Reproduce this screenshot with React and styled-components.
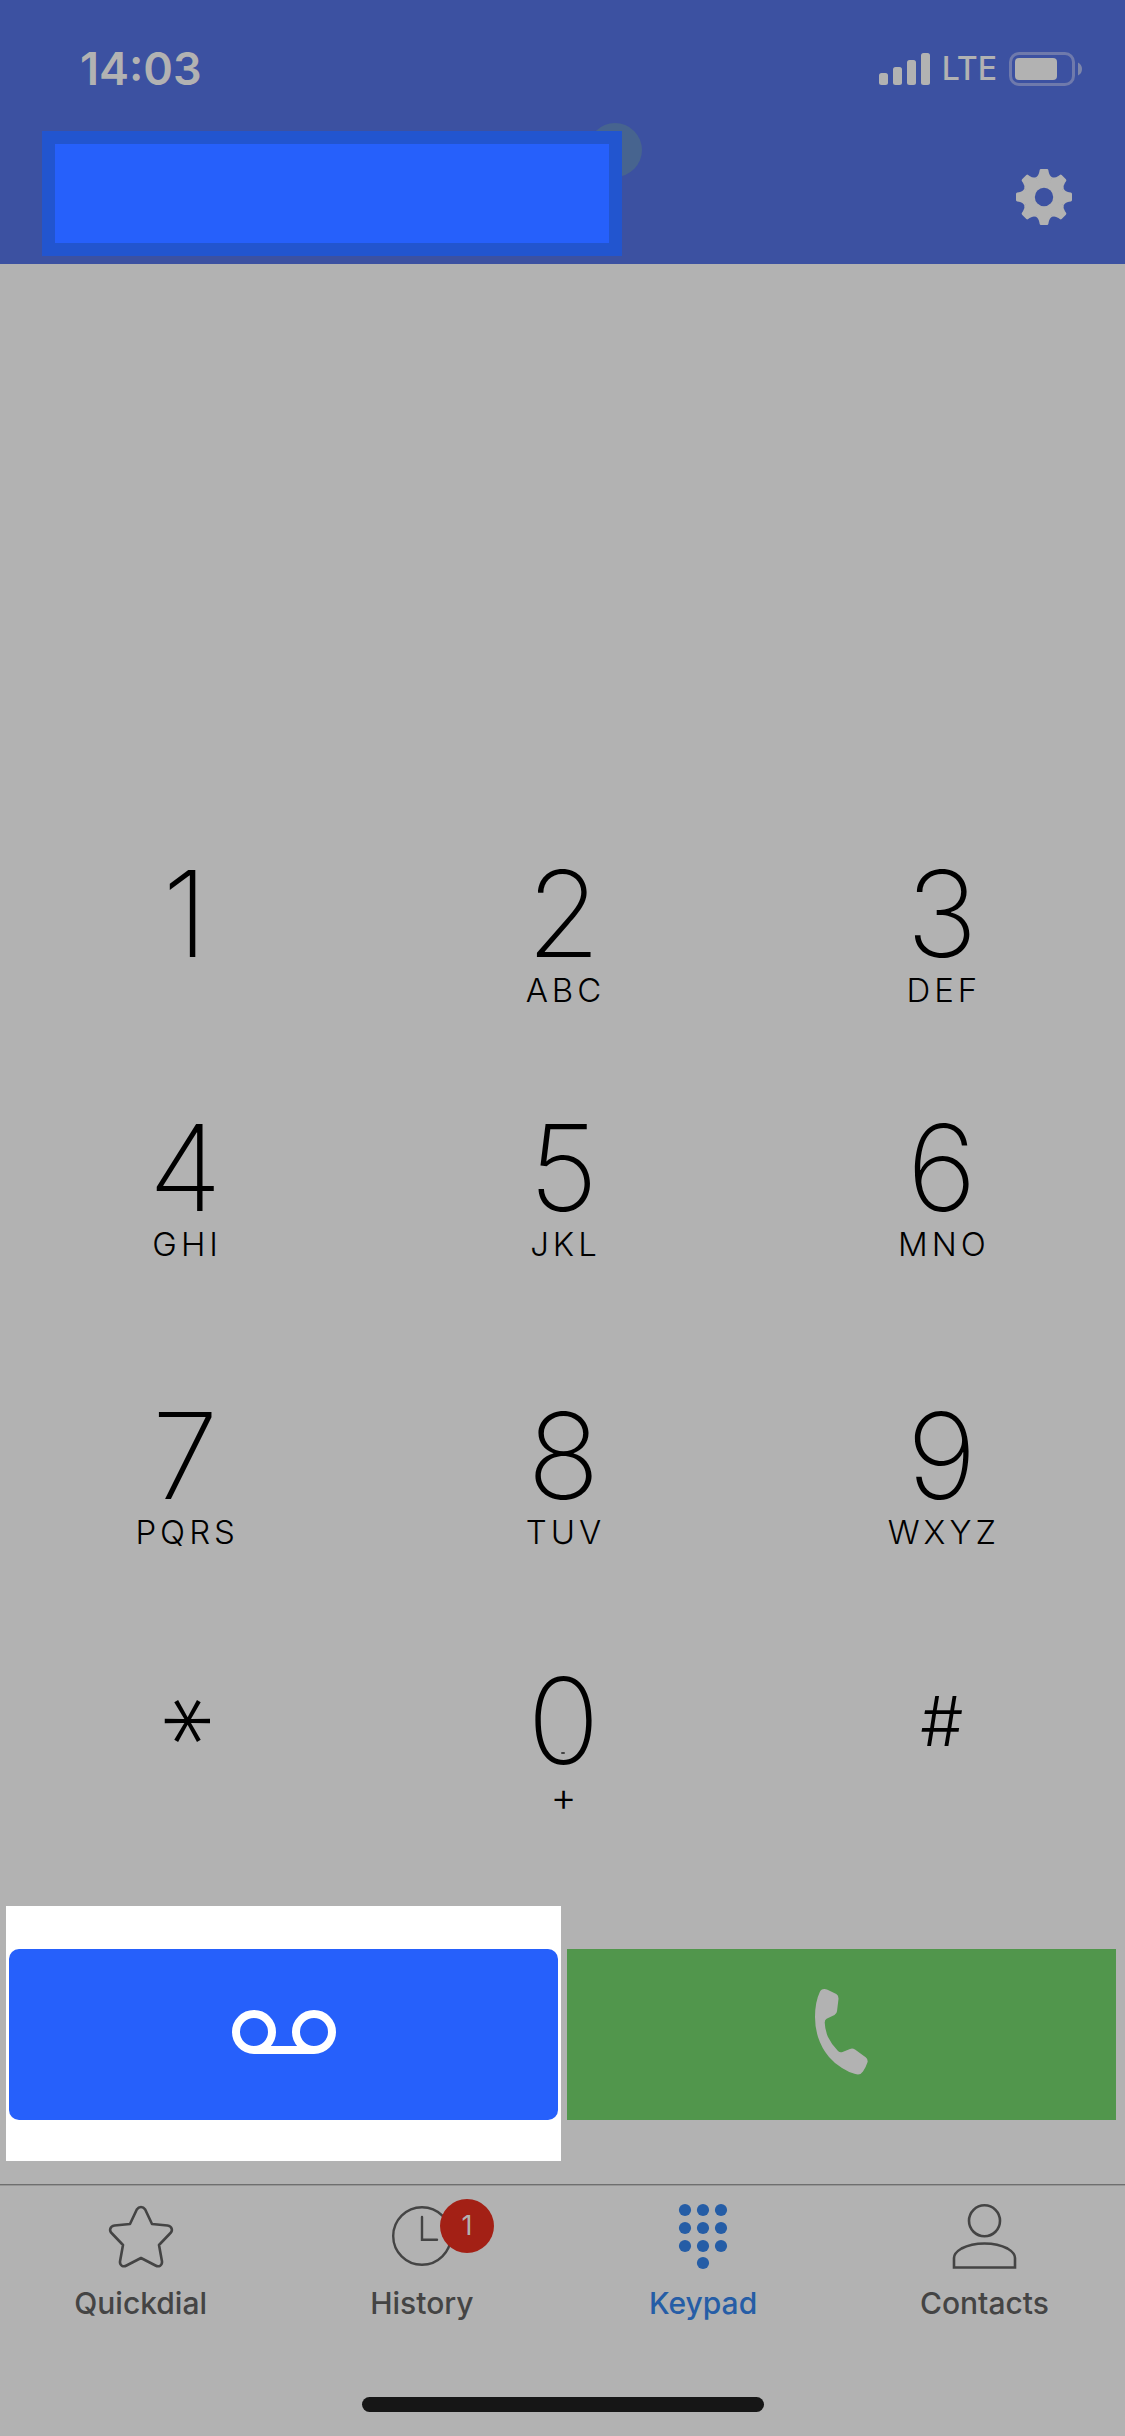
import React, { useState } from 'react';
import styled, { createGlobalStyle } from 'styled-components';

const GlobalStyle = createGlobalStyle`
  *,
  *::before,
  *::after {
    box-sizing: border-box;
  }

  body {
    margin: 0;
    background: #b2b2b2;
    font-family: Inter, 'Liberation Sans', sans-serif;
  }

  button {
    margin: 0;
    padding: 0;
    border: 0;
    background: none;
    color: inherit;
    font-family: inherit;
    cursor: pointer;
  }

  svg {
    display: block;
  }
`;

const Screen = styled.div`
  min-height: 100vh;
  display: flex;
  flex-direction: column;
  background: #b2b2b2;
`;

const Header = styled.header`
  padding-bottom: 8px;
  background: #3c51a1;
  color: #b2b2b2;
`;

const StatusBar = styled.div`
  display: flex;
  align-items: center;
  justify-content: space-between;
  height: 131px;
  padding: 7px 43px 0 80px;
`;

const Time = styled.time`
  font-size: 45px;
  line-height: 56px;
  font-weight: 600;
`;

const StatusIcons = styled.div`
  display: flex;
  align-items: center;
  gap: 12px;
`;

const Carrier = styled.span`
  font-size: 32px;
  line-height: 36px;
  font-weight: 500;
`;

const TitleBar = styled.div`
  display: flex;
  align-items: center;
  justify-content: space-between;
  padding: 0 53px 0 42px;
`;

const Account = styled.div`
  position: relative;
  z-index: 0;
  flex: 0 1 580px;
`;

const AccountName = styled.div`
  height: 125px;
  border: 13px solid #2255cf;
  background: #2660fb;
`;

const Presence = styled.span`
  position: absolute;
  z-index: -1;
  top: -8px;
  right: -20px;
  width: 54px;
  height: 54px;
  border-radius: 50%;
  background: #47648f;
`;

const SettingsButton = styled.button`
  padding-top: 6px;
`;

const NumberDisplay = styled.output`
  display: block;
  flex: 1;
  min-height: 160px;
  padding: 240px 40px 0;
  text-align: center;
  font-size: 88px;
  font-weight: 200;
`;

const Pad = styled.div`
  display: grid;
  grid-template-columns: repeat(3, 1fr);
  grid-template-rows: 254px 288px 265px 243px;
  column-gap: 12px;
  align-items: start;
  padding-left: 2px;
`;

const Key = styled.button`
  position: relative;
  display: flex;
  flex-direction: column;
  align-items: center;
  height: 160px;
  color: #000;
`;

const Digit = styled.span`
  font-size: 120px;
  line-height: 116px;
  font-weight: 200;
`;

const Pound = styled.span`
  font-size: 68px;
  line-height: 116px;
  font-weight: 300;
`;

/* turned so that one of the three bars lies flat */
const Star = styled.span`
  margin-top: 15px;
  font-size: 112px;
  line-height: 116px;
  font-weight: 200;
  transform: rotate(90deg);
  transform-origin: 50% 37%;
`;

const Letters = styled.span`
  padding-left: 4px;
  font-size: 33px;
  line-height: 36px;
  font-weight: 300;
  letter-spacing: 4px;
`;

const Plus = styled.span`
  font-size: 40px;
  line-height: 36px;
  font-weight: 300;
`;

const Speck = styled.i`
  position: absolute;
  top: 89px;
  width: 4px;
  height: 2px;
  border-radius: 1px;
  background: #444;
`;

const Actions = styled.div`
  display: grid;
  grid-template-columns: 1fr 1fr;
  gap: 9px;
  align-items: start;
  padding: 0 9px 23px;
`;

const Spotlight = styled.div`
  margin: 0 -3px;
  padding: 43px 3px 41px;
  background: #fff;
`;

const ActionButton = styled.button`
  display: flex;
  align-items: center;
  justify-content: center;
  width: 100%;
  height: 171px;
  padding-bottom: 5px;
  background: ${props => props.$color};
  border-radius: ${props => (props.$rounded ? '10px' : '0')};
`;

const CallButton = styled(ActionButton)`
  margin-top: 43px;
`;

const TabBar = styled.nav`
  display: grid;
  grid-template-columns: repeat(4, 1fr);
  padding-top: 15px;
  border-top: 1px solid #6f6f6f;
  box-shadow: inset 0 1px 0 #979797;
`;

const TabItem = styled.a`
  display: flex;
  flex-direction: column;
  align-items: center;
  gap: 13px;
  color: ${props => (props.$active ? '#255da6' : '#444444')};
  font-size: 30px;
  line-height: 36px;
  font-weight: 500;
  text-decoration: none;
`;

const TabIcon = styled.span`
  position: relative;
`;

const Badge = styled.span`
  position: absolute;
  top: -1px;
  left: 54px;
  width: 54px;
  height: 54px;
  border-radius: 50%;
  background: #a32015;
  color: #b2b2b2;
  font-size: 27px;
  line-height: 54px;
  font-weight: 400;
  text-align: center;
`;

const HomeArea = styled.div`
  display: flex;
  justify-content: center;
  padding: 76px 0 24px;
`;

const HomeIndicator = styled.div`
  width: 402px;
  height: 15px;
  border-radius: 8px;
  background: #161616;
`;

const SignalIcon = () => (
  <svg width="51" height="34" viewBox="0 0 51 34" fill="#b2b2b2">
    <rect x="0" y="21" width="9" height="12" rx="2.5" />
    <rect x="14" y="15" width="9" height="18" rx="2.5" />
    <rect x="28" y="8" width="9" height="25" rx="2.5" />
    <rect x="42" y="1" width="9" height="32" rx="2.5" />
  </svg>
);

const BatteryIcon = () => (
  <svg width="73" height="34" viewBox="0 0 73 34">
    <rect x="1.5" y="1.5" width="63" height="31" rx="8.5" fill="none" stroke="#6f7aac" strokeWidth="3" />
    <rect x="6" y="6" width="42" height="22" rx="4" fill="#b2b2b2" />
    <path d="M69 10.5Q73 12.500 73 17T69 23.500Z" fill="#7d86aa" />
  </svg>
);

const TOOTH =
  'M0 0L-8.200 -19.800Q-5.500 -21 -4.700 -25L-4.400 -26.800Q-4.200 -28 -3 -28H3Q4.200 -28 4.400 -26.800L4.700 -25Q5.500 -21 8.200 -19.800Z';

const GearIcon = () => (
  <svg width="56" height="56" viewBox="-28 -28 56 56">
    <circle r="20" fill="#b2b2b2" />
    {[0, 45, 90, 135, 180, 225, 270, 315].map(angle => (
      <path key={angle} d={TOOTH} fill="#b2b2b2" transform={`rotate(${angle})`} />
    ))}
    <circle r="9.200" fill="#3c51a1" />
  </svg>
);

const VoicemailIcon = () => (
  <svg width="104" height="44" viewBox="0 0 104 44" fill="none" stroke="#fff" strokeWidth="8">
    <circle cx="22" cy="22" r="18" />
    <circle cx="82" cy="22" r="18" />
    <path d="M22 40H82" />
  </svg>
);

const PhoneIcon = () => (
  <svg width="53" height="86" viewBox="0 0 53 86" fill="#b2b2b2">
    <path d="M9.300 0Q6 0 4.800 3Q0 13 0 28Q0 38 3 48Q6.500 59 14 68Q20 75 27 79Q33 83 40.300 85Q45.500 86.500 48 82.500Q51 78 52.600 73Q53 70 50.700 68.300L40 60.500Q37.500 59 35 60L27.500 63Q25 64 23 62Q16.500 55.500 13 48Q10 41 9.700 33.500Q9.700 31 11.600 29.700L19.500 26Q21.700 24.800 22 22.300L23.500 10Q23.700 6.500 21.300 5L12.500 .7Q11 0 9.300 0Z" />
  </svg>
);

const StarIcon = () => (
  <svg width="72" height="72" viewBox="0 0 72 72" fill="none" stroke="currentColor" strokeWidth="2.600" strokeLinejoin="round">
    <path d="M31.800 9.500Q33.500 7 36 7T40.200 9.500L47 24L62.500 25.500Q66 26 66.800 29Q67.300 31.500 65 33.500L54 45L57 61.500Q57.300 64.500 55 65.800Q53 66.800 50.500 65.500L36 58L21.500 65.500Q19 66.800 17 65.800Q14.700 64.500 15 61.500L18 45L7 33.500Q4.700 31.500 5.200 29Q6 26 9.500 25.500L25 24Z" />
  </svg>
);

const ClockIcon = () => (
  <svg width="72" height="72" viewBox="0 0 72 72" fill="none" stroke="currentColor" strokeWidth="2.400" strokeLinecap="round">
    <circle cx="36" cy="36" r="28.800" />
    <path d="M36 17V39.700H51" />
  </svg>
);

const DOTS = [[18, 10], [36, 10], [54, 10], [18, 28], [36, 28], [54, 28], [18, 46], [36, 46], [54, 46], [36, 63]];

const DialpadIcon = () => (
  <svg width="72" height="72" viewBox="0 0 72 72" fill="currentColor">
    {DOTS.map(([x, y]) => (
      <circle key={`${x}-${y}`} cx={x} cy={y} r="6.100" />
    ))}
  </svg>
);

const PersonIcon = () => (
  <svg width="72" height="72" viewBox="0 0 72 72" fill="none" stroke="currentColor" strokeWidth="2.600">
    <circle cx="36.500" cy="20.800" r="15.500" />
    <path d="M6 67.500V58Q6 53 13.500 48.500Q23 43.500 36.500 43.500T59.500 48.500Q67 53 67 58V67.500Z" />
  </svg>
);

const keys = [
  { value: '1' },
  { value: '2', letters: 'ABC' },
  { value: '3', letters: 'DEF' },
  { value: '4', letters: 'GHI' },
  { value: '5', letters: 'JKL' },
  { value: '6', letters: 'MNO' },
  { value: '7', letters: 'PQRS' },
  { value: '8', letters: 'TUV' },
  { value: '9', letters: 'WXYZ' },
  { value: '*', glyph: Star },
  { value: '0', plus: true },
  { value: '#', glyph: Pound }
];

const tabs = [
  { name: 'Quickdial', icon: StarIcon },
  { name: 'History', icon: ClockIcon, badge: 1 },
  { name: 'Keypad', icon: DialpadIcon },
  { name: 'Contacts', icon: PersonIcon }
];

const App = () => {
  const [number, setNumber] = useState('');
  const [currentTab, setCurrentTab] = useState('Keypad');

  return (
    <Screen>
      <GlobalStyle />
      <Header>
        <StatusBar>
          <Time>14:03</Time>
          <StatusIcons>
            <SignalIcon />
            <Carrier>LTE</Carrier>
            <BatteryIcon />
          </StatusIcons>
        </StatusBar>
        <TitleBar>
          <Account>
            <Presence />
            <AccountName />
          </Account>
          <SettingsButton aria-label="Settings">
            <GearIcon />
          </SettingsButton>
        </TitleBar>
      </Header>

      <NumberDisplay>{number}</NumberDisplay>

      <Pad>
        {keys.map(({ value, letters, plus, glyph: Glyph = Digit }) => (
          <Key key={value} onClick={() => setNumber(number + value)}>
            <Glyph>{value}</Glyph>
            {letters && <Letters>{letters}</Letters>}
            {plus && <Plus>+</Plus>}
            {plus && <Speck />}
          </Key>
        ))}
      </Pad>

      <Actions>
        <Spotlight>
          <ActionButton $color="#2660fb" $rounded aria-label="Voicemail">
            <VoicemailIcon />
          </ActionButton>
        </Spotlight>
        <CallButton $color="#51964c" aria-label="Call">
          <PhoneIcon />
        </CallButton>
      </Actions>

      <TabBar>
        {tabs.map(({ name, icon: Icon, badge }) => (
          <TabItem
            key={name}
            href={`#${name.toLowerCase()}`}
            $active={name === currentTab}
            onClick={() => setCurrentTab(name)}
          >
            <TabIcon>
              <Icon />
              {badge && <Badge>{badge}</Badge>}
            </TabIcon>
            {name}
          </TabItem>
        ))}
      </TabBar>

      <HomeArea>
        <HomeIndicator />
      </HomeArea>
    </Screen>
  );
};

export default App;
